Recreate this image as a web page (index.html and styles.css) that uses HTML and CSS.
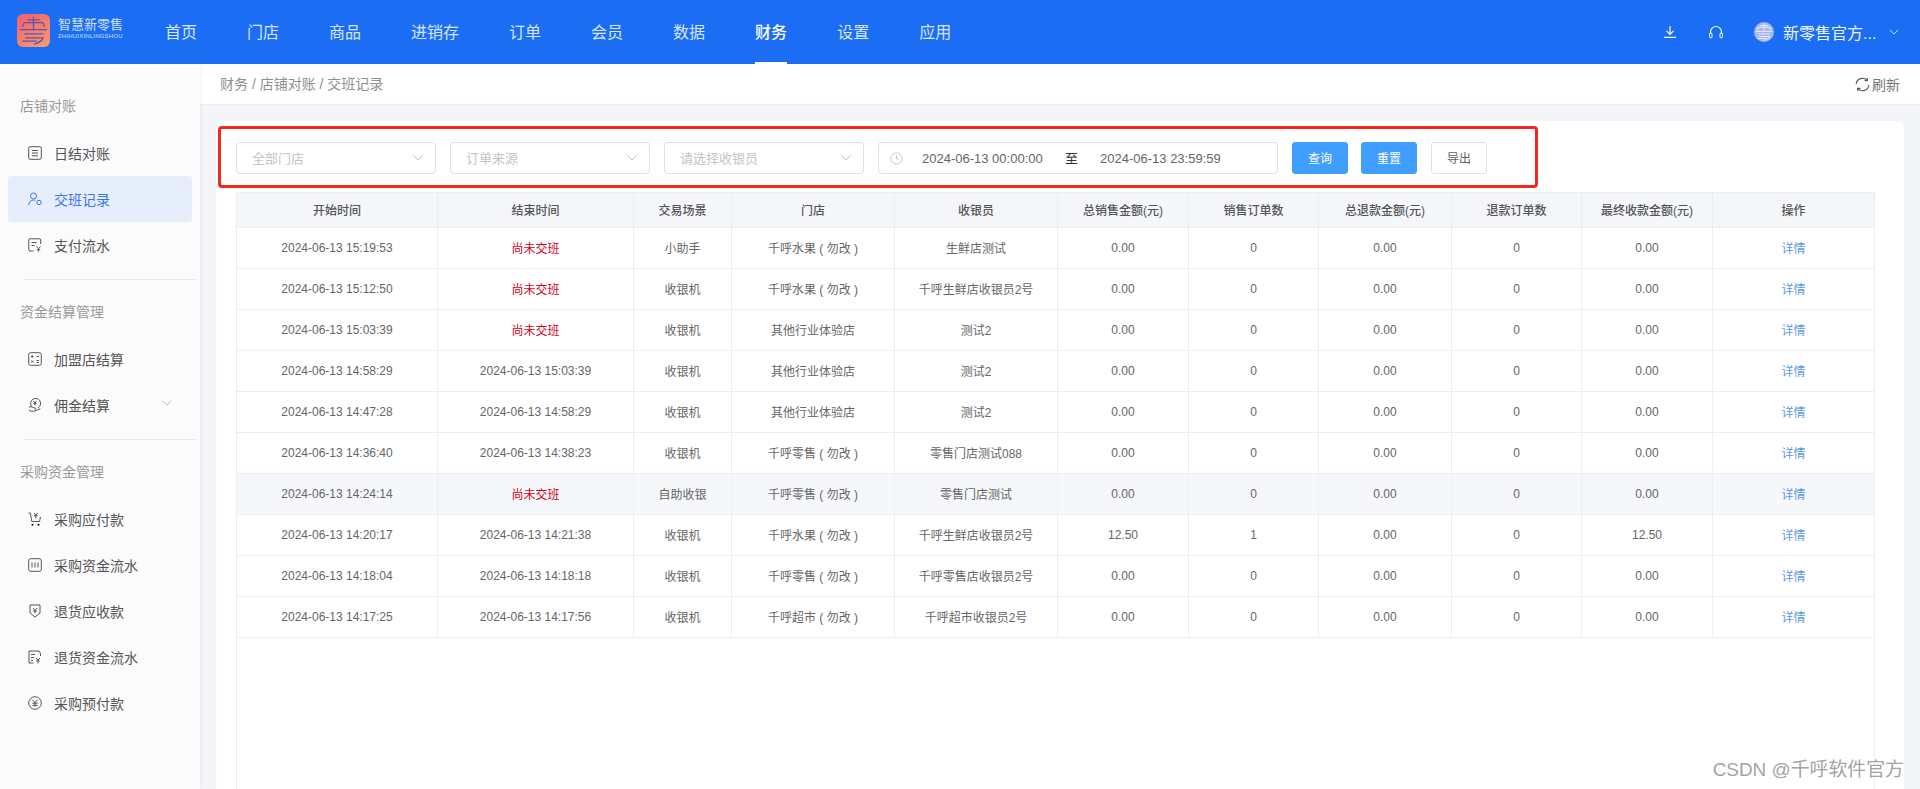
FILE: index.html
```html
<!DOCTYPE html>
<html lang="zh-CN">
<head>
<meta charset="utf-8">
<title>交班记录</title>
<link rel="stylesheet" href="styles.css">
</head>
<body>
<svg class="defs" width="0" height="0" aria-hidden="true">
  <symbol id="mark" viewBox="0 0 34 34">
    <g fill="none" stroke-linecap="round" stroke-linejoin="round">
      <path d="M11 6h12M17 3.500v13M6 13c0-3 1-4 3-4h16c2 0 3 1 3 4M3.500 16h27M8 20.500h19M9 24.500h18c-1 3-4 5-9 6.500M6 28h14"/>
    </g>
  </symbol>
  <symbol id="chev" viewBox="0 0 12 7">
    <path d="M1 1l5 5 5-5" fill="none" stroke="currentColor" stroke-width="1"/>
  </symbol>
</svg>

<header class="topbar">
  <div class="brand">
    <svg class="logo" viewBox="0 0 34 34"><use href="#mark"/></svg>
    <div class="brand-text">
      <span class="brand-cn">智慧新零售</span>
      <span class="brand-en">ZHIHUIXINLINGSHOU</span>
    </div>
  </div>
  <nav class="nav">
    <a class="nav-item">首页</a>
    <a class="nav-item">门店</a>
    <a class="nav-item">商品</a>
    <a class="nav-item">进销存</a>
    <a class="nav-item">订单</a>
    <a class="nav-item">会员</a>
    <a class="nav-item">数据</a>
    <a class="nav-item active">财务</a>
    <a class="nav-item">设置</a>
    <a class="nav-item">应用</a>
  </nav>
  <div class="top-tools">
    <svg class="tool dl" viewBox="0 0 12 12"><path d="M6 0v8M2.500 4.800L6 8.300l3.500-3.500M0 11.400h12" fill="none" stroke="currentColor" stroke-width="1.200"/></svg>
    <svg class="tool hs" viewBox="0 0 16 14"><path d="M2.500 9V7a5.500 5.500 0 0 1 11 0v2" fill="none" stroke="currentColor" stroke-width="1.200"/><rect x="1.600" y="8" width="2.400" height="5" rx="1.200" fill="none" stroke="currentColor" stroke-width="1"/><rect x="12" y="8" width="2.400" height="5" rx="1.200" fill="none" stroke="currentColor" stroke-width="1"/></svg>
    <svg class="avatar" viewBox="0 0 34 34"><use href="#mark"/></svg>
    <span class="user">新零售官方...</span>
    <svg class="user-chev" viewBox="0 0 12 7"><use href="#chev"/></svg>
  </div>
</header>

<div class="shell">
  <aside class="sidebar">
    <div class="side-title">店铺对账</div>
    <a class="side-item"><svg class="ico" viewBox="0 0 14 14"><g fill="none" stroke="currentColor"><rect x=".7" y=".7" width="12.600" height="12.600" rx="1.500"/><path d="M4 4.500h6M4 7h6M4 9.800h6"/></g></svg>日结对账</a>
    <a class="side-item on"><svg class="ico" viewBox="0 0 14 14"><g fill="none" stroke="currentColor"><circle cx="5.500" cy="4" r="3"/><path d="M.8 13c0-3 2-5 4.700-5 .7 0 1.300.1 1.800.4"/><circle cx="11" cy="10.500" r="2.200"/></g></svg>交班记录</a>
    <a class="side-item"><svg class="ico" viewBox="0 0 14 14"><g fill="none" stroke="currentColor"><path d="M5.500 13H2a1.200 1.200 0 0 1-1.200-1.200V2A1.200 1.200 0 0 1 2 .8h9.500A1.200 1.200 0 0 1 12.700 2v4"/><path d="M3.500 4.500h5M3.500 7.500h3M8.500 8.500l2 2.200 2-2.200M10.500 10.700v3M8.800 11.700h3.400"/></g></svg>支付流水</a>
    <div class="side-rule"></div>
    <div class="side-title">资金结算管理</div>
    <a class="side-item"><svg class="ico" viewBox="0 0 14 14"><g fill="none" stroke="currentColor"><rect x=".7" y=".7" width="12.600" height="12.600" rx="2"/><path d="M3 4.500h2.500M4.200 3.200v2.600M8.500 4.500H11M3.200 8.500l2 2M5.200 8.500l-2 2M8.500 8.500H11M8.500 10.500H11"/></g></svg>加盟店结算</a>
    <a class="side-item"><svg class="ico" viewBox="0 0 14 14"><g fill="none" stroke="currentColor"><path d="M3.500 8.200A5 5 0 1 1 10 9.800"/><path d="M.8 9.500c1.500-1.200 3-1 4.200 0l2.200.6c1 .4.500 1.500-.5 1.400M.8 12c2 1.600 4.300 1.500 6 1l5.500-2.300"/><path d="M5.500 3l1.500 2 1.500-2M5.500 5.500h3M7 5v2.500"/></g></svg>佣金结算<svg class="side-chev" viewBox="0 0 12 7"><use href="#chev"/></svg></a>
    <div class="side-rule"></div>
    <div class="side-title">采购资金管理</div>
    <a class="side-item"><svg class="ico" viewBox="0 0 14 14"><g fill="none" stroke="currentColor"><path d="M.5 1h1.800l1.500 8.500h7.700l1-4.500"/><path d="M6 1l1.800 2.200L9.600 1M6 3.700h3.600M7.800 3.300v3.200"/></g><circle cx="4.500" cy="12.800" r="1"/><circle cx="10.500" cy="12.800" r="1"/></svg>采购应付款</a>
    <a class="side-item"><svg class="ico" viewBox="0 0 14 14"><g fill="none" stroke="currentColor"><rect x=".7" y=".7" width="12.600" height="12.600" rx="2"/><path d="M4 4.500v5M7 4.500v5M10 4.500v5"/></g></svg>采购资金流水</a>
    <a class="side-item"><svg class="ico" viewBox="0 0 14 14"><g fill="none" stroke="currentColor"><path d="M2 1h10v8l-5 4-5-4z" stroke-linejoin="round"/><path d="M5 4l2 2.500L9 4M5 7h4M7 6.500V9.500"/></g></svg>退货应收款</a>
    <a class="side-item"><svg class="ico" viewBox="0 0 14 14"><g fill="none" stroke="currentColor"><path d="M5.500 13H1V1h10l1.500 2.500V6"/><path d="M3 4.500h4M3 7.500h3M3 10.500h2M8 8l2 2.200L12 8M10 10v3.500M8.300 11h3.400"/></g></svg>退货资金流水</a>
    <a class="side-item"><svg class="ico" viewBox="0 0 14 14"><g fill="none" stroke="currentColor"><circle cx="7" cy="7" r="6.300"/><path d="M4.500 3.700L7 6.800l2.500-3.100M4.300 7.200h5.400M4.300 9.300h5.400M7 6.800v4"/></g></svg>采购预付款</a>
  </aside>

  <main class="main">
    <div class="crumbs">
      <span class="crumb-text">财务 / 店铺对账 / 交班记录</span>
      <a class="refresh"><svg class="refresh-ico" viewBox="0 0 15 15"><g fill="none" stroke="currentColor" stroke-width="1.100"><path d="M1.200 7A6.300 6.300 0 0 1 12 3.200"/><path d="M12.300 .9v2.700H9.600"/><path d="M13.800 8A6.300 6.300 0 0 1 3 11.800"/><path d="M2.700 14.100v-2.700h2.700"/></g></svg>刷新</a>
    </div>
    <div class="content">
      <section class="card">
        <div class="filters">
          <div class="select">全部门店<svg class="sel-chev" viewBox="0 0 12 7"><use href="#chev"/></svg></div>
          <div class="select">订单来源<svg class="sel-chev" viewBox="0 0 12 7"><use href="#chev"/></svg></div>
          <div class="select">请选择收银员<svg class="sel-chev" viewBox="0 0 12 7"><use href="#chev"/></svg></div>
          <div class="range">
            <svg class="clock" viewBox="0 0 14 14"><g fill="none" stroke="currentColor"><circle cx="7" cy="7" r="6"/><path d="M7 3.500V7.500h3"/></g></svg>
            <span class="range-val">2024-06-13 00:00:00</span>
            <span class="range-sep">至</span>
            <span class="range-val">2024-06-13 23:59:59</span>
          </div>
          <button class="btn primary">查询</button>
          <button class="btn primary">重置</button>
          <button class="btn ghost">导出</button>
        </div>
        <div class="table-wrap">
          <table class="grid">
            <colgroup>
              <col class="c1"><col class="c2"><col class="c3"><col class="c4"><col class="c5"><col class="c6"><col class="c7"><col class="c8"><col class="c9"><col class="c10"><col class="c11">
            </colgroup>
            <thead>
              <tr><th>开始时间</th><th>结束时间</th><th>交易场景</th><th>门店</th><th>收银员</th><th>总销售金额(元)</th><th>销售订单数</th><th>总退款金额(元)</th><th>退款订单数</th><th>最终收款金额(元)</th><th>操作</th></tr>
            </thead>
            <tbody>
              <tr><td>2024-06-13 15:19:53</td><td class="open">尚未交班</td><td>小助手</td><td>千呼水果 ( 勿改 )</td><td>生鲜店测试</td><td>0.00</td><td>0</td><td>0.00</td><td>0</td><td>0.00</td><td><a class="link">详情</a></td></tr>
              <tr><td>2024-06-13 15:12:50</td><td class="open">尚未交班</td><td>收银机</td><td>千呼水果 ( 勿改 )</td><td>千呼生鲜店收银员2号</td><td>0.00</td><td>0</td><td>0.00</td><td>0</td><td>0.00</td><td><a class="link">详情</a></td></tr>
              <tr><td>2024-06-13 15:03:39</td><td class="open">尚未交班</td><td>收银机</td><td>其他行业体验店</td><td>测试2</td><td>0.00</td><td>0</td><td>0.00</td><td>0</td><td>0.00</td><td><a class="link">详情</a></td></tr>
              <tr><td>2024-06-13 14:58:29</td><td>2024-06-13 15:03:39</td><td>收银机</td><td>其他行业体验店</td><td>测试2</td><td>0.00</td><td>0</td><td>0.00</td><td>0</td><td>0.00</td><td><a class="link">详情</a></td></tr>
              <tr><td>2024-06-13 14:47:28</td><td>2024-06-13 14:58:29</td><td>收银机</td><td>其他行业体验店</td><td>测试2</td><td>0.00</td><td>0</td><td>0.00</td><td>0</td><td>0.00</td><td><a class="link">详情</a></td></tr>
              <tr><td>2024-06-13 14:36:40</td><td>2024-06-13 14:38:23</td><td>收银机</td><td>千呼零售 ( 勿改 )</td><td>零售门店测试088</td><td>0.00</td><td>0</td><td>0.00</td><td>0</td><td>0.00</td><td><a class="link">详情</a></td></tr>
              <tr class="hover"><td>2024-06-13 14:24:14</td><td class="open">尚未交班</td><td>自助收银</td><td>千呼零售 ( 勿改 )</td><td>零售门店测试</td><td>0.00</td><td>0</td><td>0.00</td><td>0</td><td>0.00</td><td><a class="link">详情</a></td></tr>
              <tr><td>2024-06-13 14:20:17</td><td>2024-06-13 14:21:38</td><td>收银机</td><td>千呼水果 ( 勿改 )</td><td>千呼生鲜店收银员2号</td><td>12.50</td><td>1</td><td>0.00</td><td>0</td><td>12.50</td><td><a class="link">详情</a></td></tr>
              <tr><td>2024-06-13 14:18:04</td><td>2024-06-13 14:18:18</td><td>收银机</td><td>千呼零售 ( 勿改 )</td><td>千呼零售店收银员2号</td><td>0.00</td><td>0</td><td>0.00</td><td>0</td><td>0.00</td><td><a class="link">详情</a></td></tr>
              <tr><td>2024-06-13 14:17:25</td><td>2024-06-13 14:17:56</td><td>收银机</td><td>千呼超市 ( 勿改 )</td><td>千呼超市收银员2号</td><td>0.00</td><td>0</td><td>0.00</td><td>0</td><td>0.00</td><td><a class="link">详情</a></td></tr>
            </tbody>
          </table>
        </div>
      </section>
    </div>
  </main>
</div>

<div class="annotation"></div>
<div class="watermark">CSDN @千呼软件官方</div>
</body>
</html>
```

FILE: styles.css
```css
* { box-sizing: border-box; }
html, body { height: 100%; }
body {
  margin: 0;
  height: 789px;
  overflow: hidden;
  display: flex;
  flex-direction: column;
  position: relative;
  background: #f3f5f8;
  color: #666;
  font-family: "Liberation Sans", "Noto Sans CJK SC", sans-serif;
  font-size: 12px;
}
a { color: inherit; text-decoration: none; }
.defs { position: absolute; }

/* top bar */
.topbar {
  flex: none;
  height: 64px;
  display: flex;
  align-items: stretch;
  background: #1b6ef3;
  color: #d8e6fd;
}
.brand {
  width: 165px;
  flex: none;
  display: flex;
  align-items: center;
  padding: 0 0 4px 17px;
}
.logo {
  width: 33px;
  height: 33px;
  border-radius: 6px;
  background: linear-gradient(150deg, #ee5f6c, #fb9c72);
  stroke: #5f56a8;
  stroke-width: 1.300;
}
.brand-text { display: flex; flex-direction: column; margin: 0 0 2px 8px; color: #cfe0fd; }
.brand-cn { font-size: 13px; line-height: 14px; }
.brand-en { font-size: 6px; line-height: 8px; letter-spacing: .2px; }
.nav { display: flex; flex: 1; align-items: stretch; }
.nav-item {
  display: flex;
  align-items: center;
  margin-right: 50px;
  font-size: 16px;
  padding-bottom: 2px;
  border-bottom: 2px solid transparent;
  border-top: 2px solid transparent;
}
.nav-item.active { color: #fff; font-weight: 500; border-bottom-color: #fff; }
.top-tools { display: flex; align-items: center; color: #fff; padding-right: 21px; }
.tool { flex: none; }
.dl { width: 12px; height: 12px; margin-right: 32px; }
.hs { width: 16px; height: 14px; margin-right: 30px; }
.avatar {
  width: 20px;
  height: 20px;
  border-radius: 50%;
  background: #a8b6ee;
  stroke: #e4e9fb;
  stroke-width: 1.800;
  margin-right: 9px;
}
.user { font-size: 16px; width: 97px; white-space: nowrap; color: #eef3fe; }
.user-chev { width: 10px; height: 6px; margin-left: 9px; }

/* shell */
.shell { flex: 1; display: flex; min-height: 0; }
.sidebar {
  flex: none;
  width: 200px;
  background: #fbfbfc;
  padding: 31px 8px 0;
  box-shadow: 1px 0 3px rgba(0, 0, 0, .06);
  position: relative;
  z-index: 1;
  color: #555;
  font-size: 14px;
}
.side-title {
  height: 22px;
  line-height: 22px;
  padding-left: 12px;
  color: #9a9a9a;
  font-size: 14px;
  margin-bottom: 13px;
}
.side-item {
  height: 46px;
  display: flex;
  align-items: center;
  padding-left: 20px;
  border-radius: 4px;
  position: relative;
}
.side-item.on { background: #e6eefb; color: #3a76e8; }
.ico { width: 14px; height: 14px; margin-right: 12px; flex: none; color: #555; }
.side-item.on .ico { color: #3a76e8; }
.side-chev { width: 10px; height: 6px; margin-left: 52px; margin-top: -4px; color: #a8abb2; }
.side-rule { height: 1px; margin: 11px -4px 21px 16px; background: #e8e9eb; }

/* main */
.main { flex: 1; min-width: 0; display: flex; flex-direction: column; }
.crumbs {
  flex: none;
  height: 40px;
  background: #fff;
  display: flex;
  align-items: center;
  justify-content: space-between;
  padding: 0 20px;
  box-shadow: 0 1px 2px rgba(0, 0, 0, .05);
  font-size: 14px;
  color: #8f8f8f;
}
.crumb-text { padding-bottom: 2px; }
.refresh { display: flex; align-items: center; color: #777; font-size: 14px; }
.refresh-ico { width: 15px; height: 15px; margin-right: 2px; color: #555; }
.content { flex: 1; min-height: 0; padding: 17px 16px 0; }
.card {
  height: 100%;
  background: #fff;
  border-radius: 8px 8px 0 0;
  padding: 21px 29px 0 20px;
  display: flex;
  flex-direction: column;
}

/* filters */
.filters { flex: none; display: flex; align-items: center; height: 32px; margin-bottom: 18px; }
.select {
  width: 200px;
  height: 32px;
  border: 1px solid #dcdfe6;
  border-radius: 4px;
  margin-right: 14px;
  padding: 0 11px 2px 15px;
  display: flex;
  align-items: center;
  justify-content: space-between;
  font-size: 13px;
  color: #c0c4cc;
}
.sel-chev { width: 12px; height: 7px; color: #c0c4cc; }
.range {
  width: 400px;
  height: 32px;
  border: 1px solid #dcdfe6;
  border-radius: 4px;
  margin-right: 14px;
  padding-left: 11px;
  display: flex;
  align-items: center;
  font-size: 13px;
  color: #666;
}
.clock { width: 13px; height: 13px; color: #c0c4cc; margin-right: 19px; }
.range-val { width: 120px; white-space: nowrap; }
.range-sep { margin: 0 22px 2px 23px; color: #333; }
.btn {
  width: 56px;
  height: 32px;
  border-radius: 3px;
  font: inherit;
  font-size: 12px;
  padding: 0 0 2px;
  margin-right: 13px;
}
.btn.primary { background: #409eff; border: 1px solid #409eff; color: #fff; }
.btn.ghost { background: #fff; border: 1px solid #dcdfe6; color: #606266; margin-left: 1px; }

/* table */
.table-wrap {
  flex: 1;
  min-height: 0;
  border: 1px solid #ebeef5;
  border-bottom: 0;
}
.grid { width: 100%; table-layout: fixed; border-collapse: separate; border-spacing: 0; }
.c1 { width: 201px; }
.c2 { width: 196px; }
.c3 { width: 98px; }
.c4 { width: 163px; }
.c5 { width: 163px; }
.c6 { width: 131px; }
.c7 { width: 130px; }
.c8 { width: 133px; }
.c9 { width: 130px; }
.c10 { width: 131px; }
.c11 { width: auto; }
th, td {
  padding: 0;
  text-align: center;
  border-right: 1px solid #ebeef5;
  border-bottom: 1px solid #ebeef5;
  white-space: nowrap;
  overflow: hidden;
}
th:last-child, td:last-child { border-right: 0; }
th { height: 35px; padding-bottom: 2px; background: #f4f6fa; color: #555; font-weight: 500; }
td { height: 41px; color: #666; }
td.open, td:nth-child(3), td:nth-child(4), td:nth-child(5), td:last-child { padding-bottom: 2px; }
.hover td { background: #f5f7fa; }
.open { color: #d0021b; }
.link { color: #5a9ae2; }

/* overlays */
.annotation {
  position: absolute;
  left: 218px;
  top: 126px;
  width: 1320px;
  height: 62px;
  border: 3px solid #ee2a20;
  border-radius: 4px;
  pointer-events: none;
}
.watermark {
  position: absolute;
  right: 16px;
  top: 757px;
  font-size: 18.900px;
  line-height: 26px;
  color: #a3a3a3;
  white-space: nowrap;
}
```
